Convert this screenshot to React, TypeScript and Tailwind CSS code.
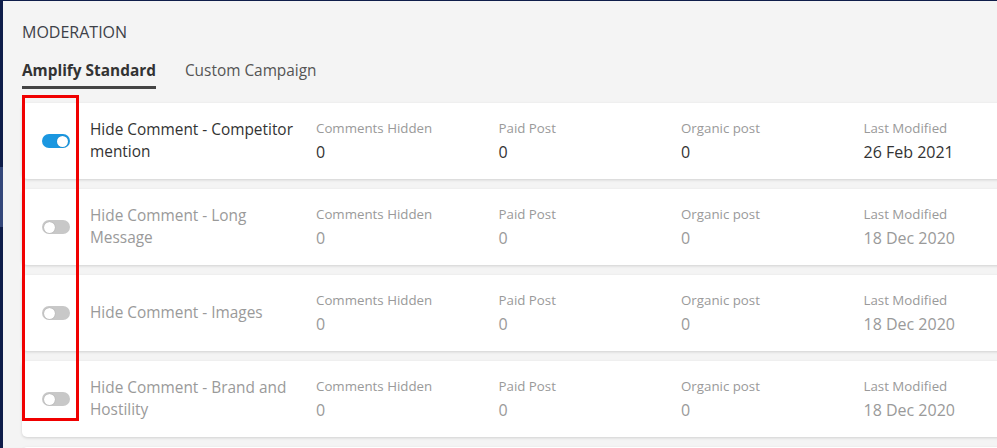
import { ReactNode } from "react";

type Rule = {
  name: string;
  enabled: boolean;
  hidden: number;
  paid: number;
  organic: number;
  modified: string;
};

const rules: Rule[] = [
  { name: "Hide Comment - Competitor mention", enabled: true, hidden: 0, paid: 0, organic: 0, modified: "26 Feb 2021" },
  { name: "Hide Comment - Long Message", enabled: false, hidden: 0, paid: 0, organic: 0, modified: "18 Dec 2020" },
  { name: "Hide Comment - Images", enabled: false, hidden: 0, paid: 0, organic: 0, modified: "18 Dec 2020" },
  { name: "Hide Comment - Brand and Hostility", enabled: false, hidden: 0, paid: 0, organic: 0, modified: "18 Dec 2020" },
];

export default function App() {
  return (
    <div className="w-[997px] h-[448px] overflow-hidden flex bg-[#f4f4f4] font-['Open_Sans','Lato',sans-serif]">
      {/* Sidebar edge */}
      <div className="w-[3px] shrink-0 flex flex-col bg-[#0f1d4a]">
        <div className="h-[167px]" />
        <div className="h-[60px] bg-[#34477a]" />
      </div>

      <div className="flex-1 min-w-0 border-t border-[#0f1d4a] pl-[19px]">
        <h1 className="mt-[21px] text-[16px] leading-5 text-[#3d4148]">MODERATION</h1>

        {/* Tabs */}
        <div className="mt-[19px] flex gap-[29px] text-[15.4px] leading-5">
          <div className="pb-[5px] border-b-[3px] border-[#444] font-bold text-[#333]">Amplify Standard</div>
          <div className="pb-[5px] text-[#555]">Custom Campaign</div>
        </div>

        {/* Rule cards */}
        <div className="relative mt-[14px] w-[1000px] flex flex-col gap-[10px]">
          <div className="absolute left-0 top-[-8px] w-[57px] h-[326px] border-[3px] border-[#f00000] z-10 pointer-events-none" />
          {rules.map((r) => (
            <RuleCard key={r.name} rule={r} />
          ))}
          {/* next card, only its top edge is in view */}
          <div className="h-[76px] shrink-0 bg-white rounded-[5px] shadow-[0_1px_3px_rgba(0,0,0,0.15)]" />
        </div>
      </div>
    </div>
  );
}

function RuleCard({ rule }: { rule: Rule }) {
  const tone = rule.enabled ? "text-[#333]" : "text-[#9a9a9a]";
  return (
    <div className="h-[76px] shrink-0 flex items-center bg-white rounded-[5px] shadow-[0_1px_3px_rgba(0,0,0,0.15)] pl-5">
      <Toggle on={rule.enabled} />
      <div className={`ml-5 w-[212px] shrink-0 text-[15.4px] leading-[22px] ${tone}`}>{rule.name}</div>
      <div className="ml-[14px] flex">
        <Stat label="Comments Hidden" tone={tone}>{rule.hidden}</Stat>
        <Stat label="Paid Post" tone={tone}>{rule.paid}</Stat>
        <Stat label="Organic post" tone={tone}>{rule.organic}</Stat>
        <Stat label="Last Modified" tone={tone}>{rule.modified}</Stat>
      </div>
    </div>
  );
}

function Stat({ label, tone, children }: { label: string; tone: string; children: ReactNode }) {
  return (
    <div className="w-[182.5px] shrink-0 flex flex-col gap-[5px]">
      <span className="text-[13.3px] leading-[17px] text-[#9a9a9a]">{label}</span>
      <span className={`text-[16px] leading-[20px] ${tone}`}>{children}</span>
    </div>
  );
}

function Toggle({ on }: { on: boolean }) {
  return (
    <div
      className={`w-[28px] h-[14px] shrink-0 rounded-full flex items-center px-[2px] ${
        on ? "bg-[#1b97e0] justify-end" : "bg-[#c8c8c8] justify-start"
      }`}
    >
      <div className="w-[11px] h-[11px] rounded-full bg-white shadow-[0_0_1px_rgba(0,0,0,0.3)]" />
    </div>
  );
}
